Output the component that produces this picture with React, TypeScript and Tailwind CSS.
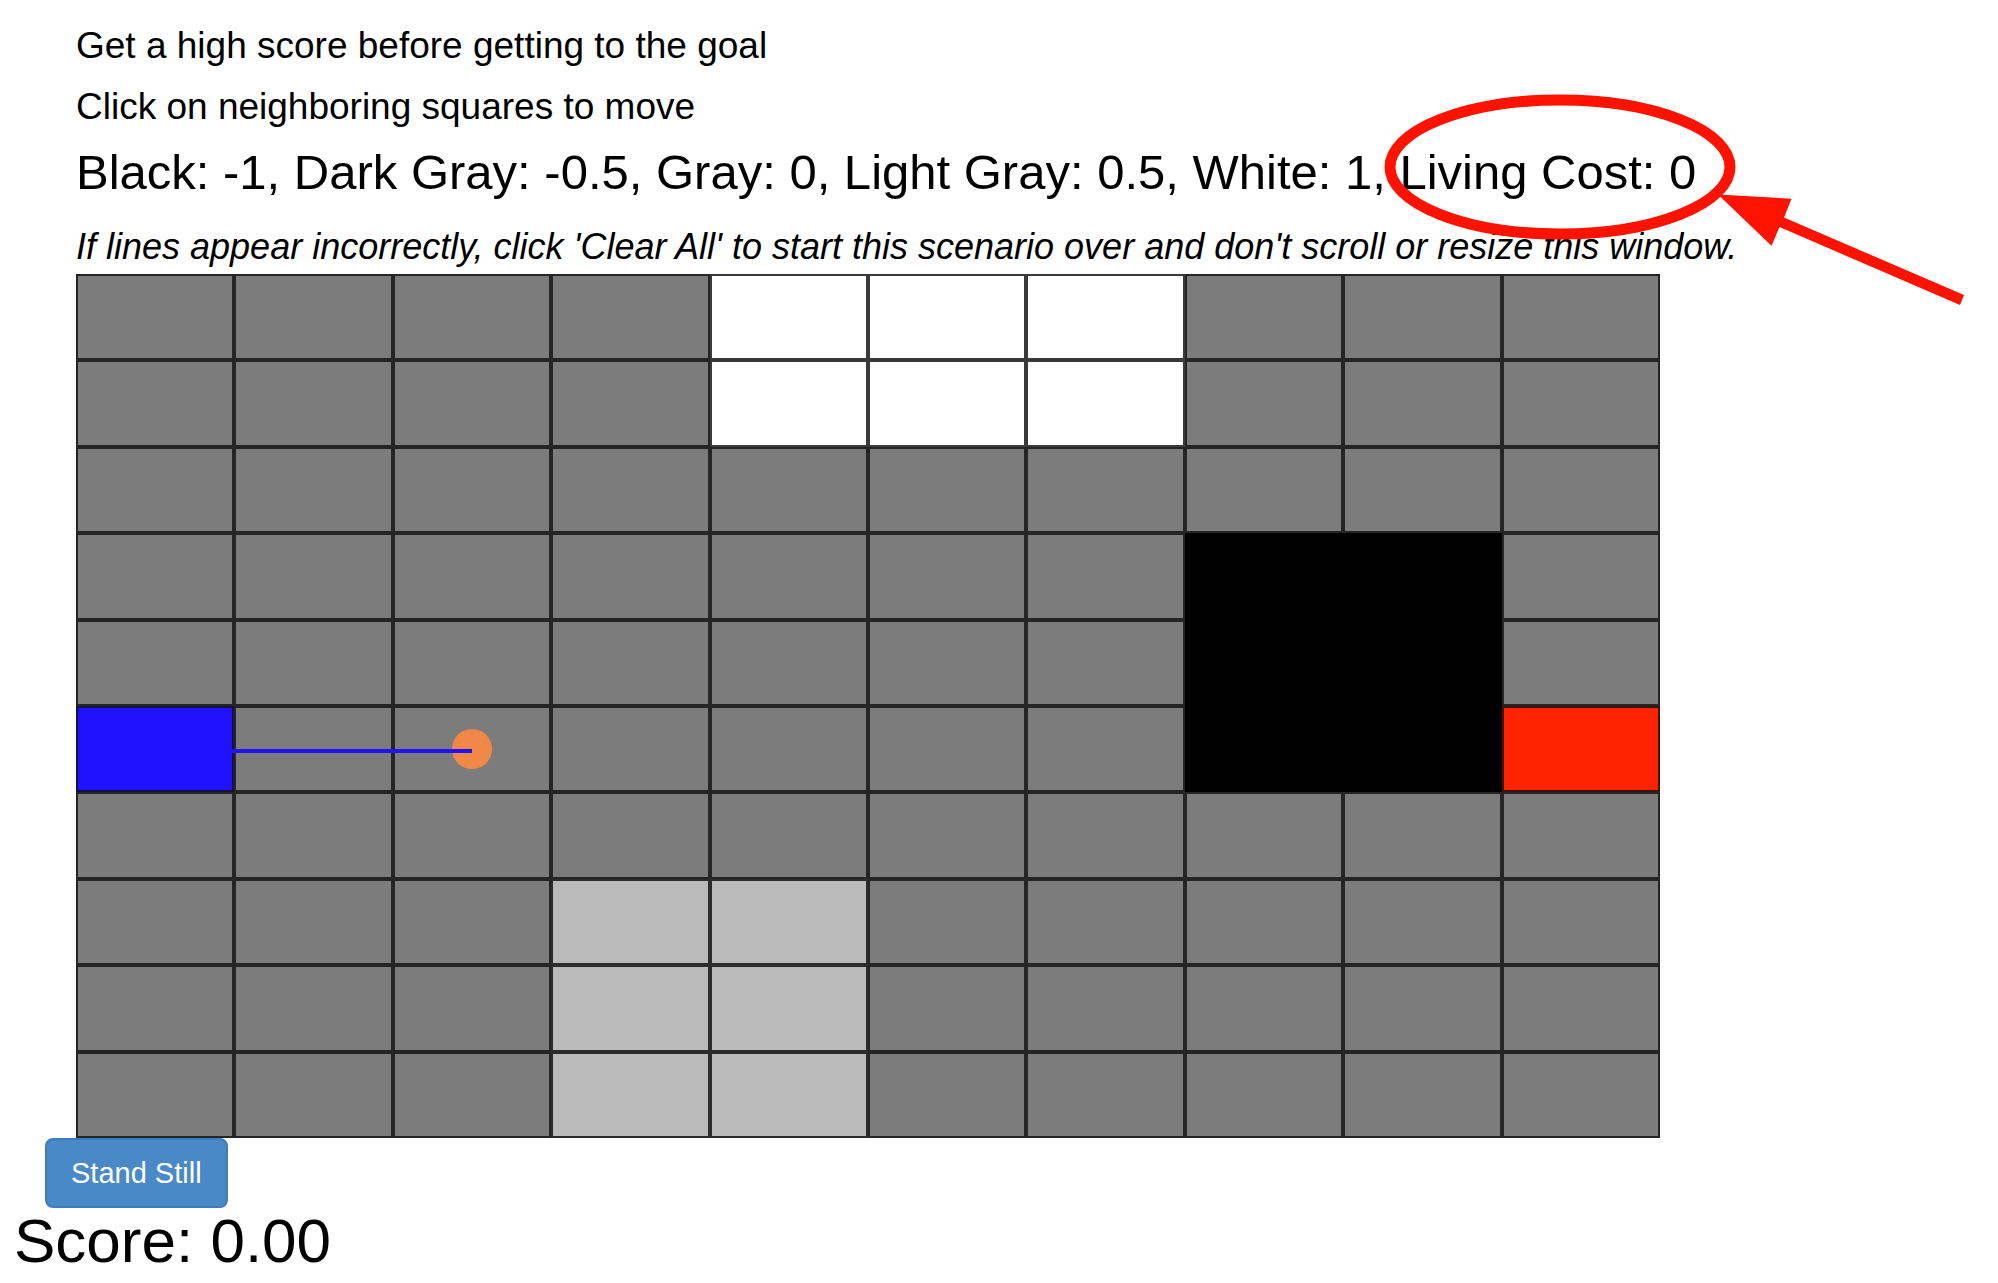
import { useState } from "react";

type Kind = "gray" | "white" | "light" | "black" | "start" | "goal";

const MAP = [
  "ggggwwwggg",
  "ggggwwwggg",
  "gggggggggg",
  "gggggggbbg",
  "gggggggbbg",
  "sggggggbbr",
  "gggggggggg",
  "gggllggggg",
  "gggllggggg",
  "gggllggggg",
];

const KINDS: Record<string, Kind> = {
  g: "gray",
  w: "white",
  l: "light",
  b: "black",
  s: "start",
  r: "goal",
};

const STYLES: Record<Kind, string> = {
  gray: "bg-[#7c7c7c] border-[#252525]",
  white: "bg-white border-[#3a3a3a]",
  light: "bg-[#bababa] border-[#2c2c2c]",
  black: "bg-black border-black",
  start: "bg-[#2012ff] border-[#14113c]",
  goal: "bg-[#ff2200] border-[#3c1408]",
};

function Board() {
  const [player] = useState({ row: 5, col: 2 });
  return (
    <div className="grid aspect-[1584/864] grid-cols-10 grid-rows-10">
      {MAP.flatMap((line, row) =>
        line.split("").map((code, col) => {
          const kind = KINDS[code];
          const here = row === player.row && col === player.col;
          const trail = row === 5 && col === 1;
          return (
            <button
              key={`${row}-${col}`}
              type="button"
              aria-label={`Row ${row + 1}, column ${col + 1}, ${kind}`}
              className={`relative border-2 ${STYLES[kind]}`}
            >
              {trail && <span className="absolute -inset-x-1 top-1/2 z-10 h-1 bg-[#2012ff]" />}
              {here && (
                <>
                  <span className="absolute top-1/2 left-1/2 size-10 -translate-x-1/2 -translate-y-1/2 rounded-full bg-[#f28847]" />
                  <span className="absolute top-1/2 right-1/2 -left-1 z-10 h-1 bg-[#2012ff]" />
                </>
              )}
            </button>
          );
        }),
      )}
    </div>
  );
}

function Annotation() {
  return (
    <svg
      className="pointer-events-none absolute top-[90px] left-[1380px] z-20"
      width="590"
      height="220"
      viewBox="1380 90 590 220"
      aria-hidden="true"
    >
      <ellipse cx="1560" cy="167" rx="170" ry="67" fill="none" stroke="#ff1200" strokeWidth="11" />
      <path
        d="M1718 194.5 L1791.5 198.7 L1784 217.5 L1964 295 L1960 305 L1779.5 227 L1771.5 245.7 Z"
        fill="#ff1200"
      />
    </svg>
  );
}

export default function App() {
  return (
    <main className="relative min-h-screen bg-white font-['Liberation_Sans',Arial,sans-serif] text-black">
      <header className="pt-[15px] pl-[76px]">
        <p className="text-[37px] leading-[61px]">Get a high score before getting to the goal</p>
        <p className="text-[37px] leading-[61px]">Click on neighboring squares to move</p>
        <p className="text-[49px] leading-[71px]">
          Black: -1, Dark Gray: -0.5, Gray: 0, Light Gray: 0.5, White: 1, Living Cost: 0
        </p>
        <p className="pt-3 text-[36px] leading-[54px] italic">
          If lines appear incorrectly, click 'Clear All' to start this scenario over and don't scroll or
          resize this window.
        </p>
      </header>
      <Annotation />
      <section aria-label="Board" className="mr-[338px] ml-[76px]">
        <Board />
      </section>
      <footer>
        <button
          type="button"
          className="ml-[45px] block h-[70px] rounded-lg border-2 border-[#3f7cba] bg-[#4a89c8] px-6 text-[29px] leading-10 text-white"
        >
          Stand Still
        </button>
        <p className="pl-[14px] text-[62px] leading-[66px]">Score: 0.00</p>
      </footer>
    </main>
  );
}
